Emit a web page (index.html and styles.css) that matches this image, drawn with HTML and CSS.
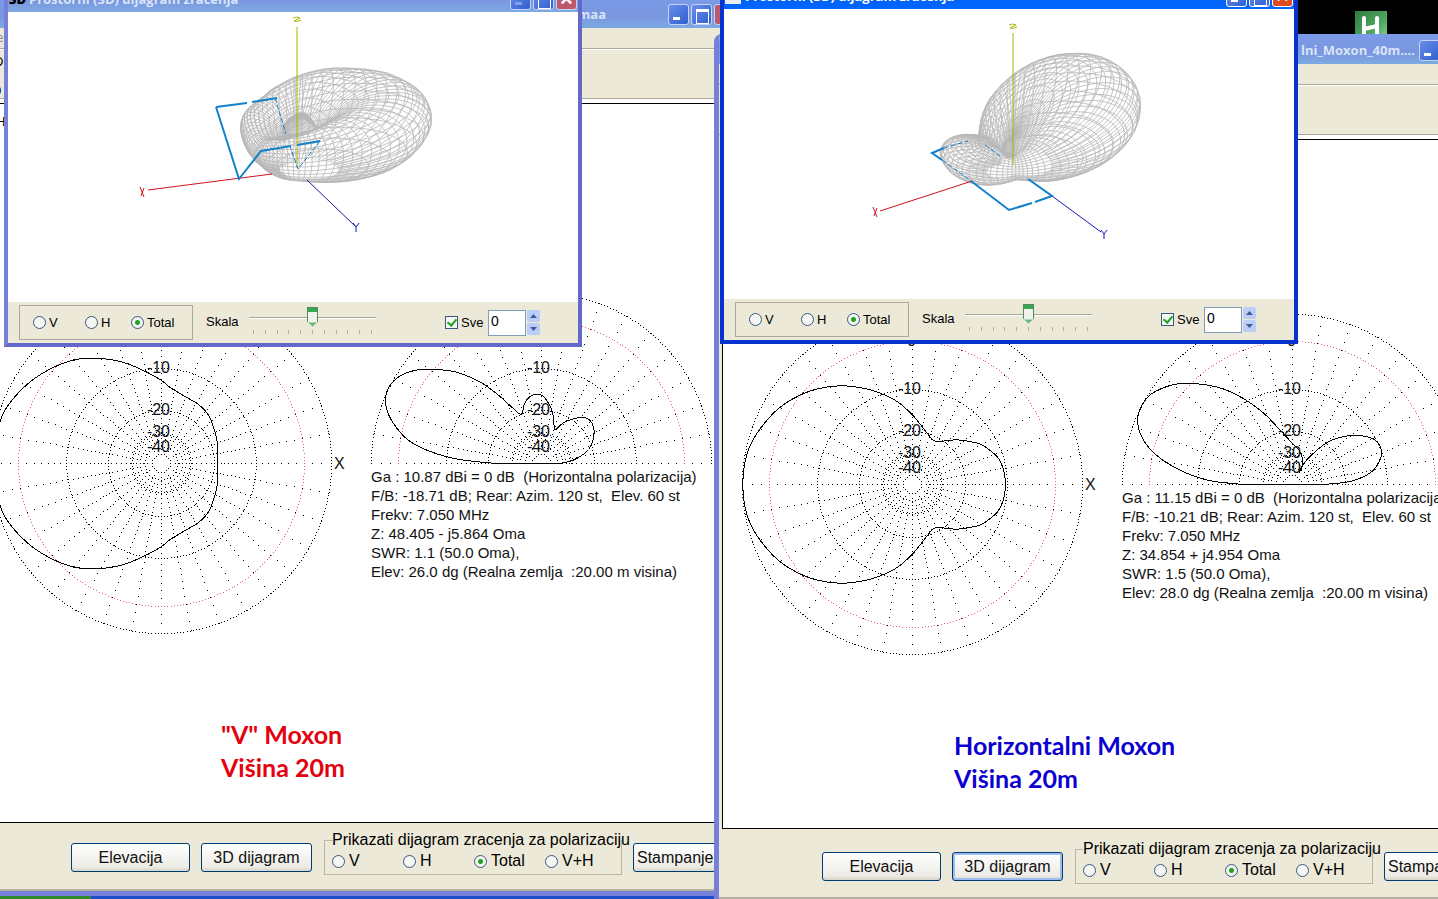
FILE: index.html
```
<!DOCTYPE html>
<html lang="sr">
<head>
<meta charset="utf-8">
<title>Moxon 40m</title>
<link rel="stylesheet" href="styles.css">
</head>
<body>
<main class="desktop">
  <svg class="desk-icon" width="32" height="32" viewBox="0 0 32 32" aria-label="H">
    <defs><linearGradient id="hg" x1="0" y1="0" x2="1" y2="1"><stop offset="0" stop-color="#2f7d40"/><stop offset=".6" stop-color="#4fa860"/><stop offset="1" stop-color="#9ad6a0"/></linearGradient></defs>
    <rect width="32" height="32" fill="url(#hg)"/>
    <path d="M9 7V29M22 7V29M9 18L22 15" stroke="#fff" stroke-width="4" stroke-linecap="round" fill="none"/>
  </svg>
  <div class="taskbar"><span class="start"></span></div>

  <section class="window main-window main-left">
    <header class="titlebar">
      <span class="title">maa</span>
      <button class="wbtn min" aria-label="Minimize"></button><button class="wbtn max" aria-label="Maximize"></button><button class="wbtn close" aria-label="Close"></button>
    </header>
    <nav class="menubar"><a href="#">File</a></nav>
    <div class="toolbar"><span>D</span><span>0</span></div>
    <div class="canvas">
      <span class="corner">H</span>
      <svg class="polar" data-plot="azimuth" data-model="v"></svg>
      <div class="side">
        <svg class="elev" data-plot="elevation" data-model="v"></svg>
        <div class="info">Ga : 10.87 dBi = 0 dB&nbsp; (Horizontalna polarizacija)<br>F/B: -18.71 dB; Rear: Azim. 120 st,&nbsp; Elev. 60 st<br>Frekv: 7.050 MHz<br>Z: 48.405 - j5.864 Oma<br>SWR: 1.1 (50.0 Oma),<br>Elev: 26.0 dg (Realna zemlja&nbsp; :20.00 m visina)</div>
      </div>
      <p class="caption red">"V" Moxon<br>Višina 20m</p>
    </div>
    <div class="actions">
      <button class="btn wide">Elevacija</button>
      <button class="btn">3D dijagram</button>
      <fieldset class="pol"><legend>Prikazati dijagram zracenja za polarizaciju</legend>
        <label><input type="radio" name="p1">V</label><label><input type="radio" name="p1">H</label><label><input type="radio" name="p1" checked>Total</label><label><input type="radio" name="p1">V+H</label>
      </fieldset>
      <button class="btn print">Stampanje</button>
    </div>
  </section>

  <section class="window popup popup-left">
    <header class="titlebar">
      <b class="icon3d">3D</b><span class="title">Prostorni (3D) dijagram zracenja</span>
      <button class="wbtn min dim" aria-label="Minimize"></button><button class="wbtn max" aria-label="Maximize"></button><button class="wbtn close" aria-label="Close">×</button>
    </header>
    <svg class="view3d" data-view="v"></svg>
    <div class="controls">
      <div class="group"><label><input type="radio" name="t1">V</label><label><input type="radio" name="t1">H</label><label><input type="radio" name="t1" checked>Total</label></div>
      <label class="skala" for="s1">Skala</label>
      <div class="slider"><input id="s1" type="range" min="0" max="10" value="5"><div class="ticks"><i></i><i></i><i></i><i></i><i></i><i></i><i></i><i></i><i></i><i></i><i></i></div></div>
      <label class="sve"><input type="checkbox" checked>Sve</label>
      <input class="num" type="text" value="0" aria-label="Sve">
      <div class="spin"><button aria-label="Up"><svg width="7" height="4" viewBox="0 0 7 4"><path d="M0 4L3.500 0L7 4z"/></svg></button><button aria-label="Down"><svg width="7" height="4" viewBox="0 0 7 4"><path d="M0 0L3.500 4L7 0z"/></svg></button></div>
    </div>
  </section>

  <section class="window main-window main-right">
    <header class="titlebar">
      <span class="title">lni_Moxon_40m....</span>
      <button class="wbtn min" aria-label="Minimize"></button><button class="wbtn max" aria-label="Maximize"></button><button class="wbtn close" aria-label="Close"></button>
    </header>
    <nav class="menubar"><a href="#">File</a></nav>
    <div class="toolbar"></div>
    <div class="canvas">
      <svg class="polar" data-plot="azimuth" data-model="h"></svg>
      <div class="side">
        <svg class="elev" data-plot="elevation" data-model="h"></svg>
        <div class="info">Ga : 11.15 dBi = 0 dB&nbsp; (Horizontalna polarizacija)<br>F/B: -10.21 dB; Rear: Azim. 120 st,&nbsp; Elev. 60 st<br>Frekv: 7.050 MHz<br>Z: 34.854 + j4.954 Oma<br>SWR: 1.5 (50.0 Oma),<br>Elev: 28.0 dg (Realna zemlja&nbsp; :20.00 m visina)</div>
      </div>
      <p class="caption blue">Horizontalni Moxon<br>Višina 20m</p>
    </div>
    <div class="actions">
      <button class="btn wide">Elevacija</button>
      <button class="btn focused">3D dijagram</button>
      <fieldset class="pol"><legend>Prikazati dijagram zracenja za polarizaciju</legend>
        <label><input type="radio" name="p2">V</label><label><input type="radio" name="p2">H</label><label><input type="radio" name="p2" checked>Total</label><label><input type="radio" name="p2">V+H</label>
      </fieldset>
      <button class="btn print">Stampanje</button>
    </div>
  </section>

  <section class="window popup popup-right">
    <header class="titlebar">
      <b class="icon3d pale"></b><span class="title">Prostorni (3D) dijagram zracenja</span>
      <button class="wbtn min" aria-label="Minimize"></button><button class="wbtn max" aria-label="Maximize"></button><button class="wbtn close" aria-label="Close">×</button>
    </header>
    <svg class="view3d" data-view="h"></svg>
    <div class="controls">
      <div class="group"><label><input type="radio" name="t2">V</label><label><input type="radio" name="t2">H</label><label><input type="radio" name="t2" checked>Total</label></div>
      <label class="skala" for="s2">Skala</label>
      <div class="slider"><input id="s2" type="range" min="0" max="10" value="5"><div class="ticks"><i></i><i></i><i></i><i></i><i></i><i></i><i></i><i></i><i></i><i></i><i></i></div></div>
      <label class="sve"><input type="checkbox" checked>Sve</label>
      <input class="num" type="text" value="0" aria-label="Sve">
      <div class="spin"><button aria-label="Up"><svg width="7" height="4" viewBox="0 0 7 4"><path d="M0 4L3.500 0L7 4z"/></svg></button><button aria-label="Down"><svg width="7" height="4" viewBox="0 0 7 4"><path d="M0 0L3.500 4L7 0z"/></svg></button></div>
    </div>
  </section>
</main>
<script src="plots.js"></script>
</body>
</html>
```
FILE: styles.css
```
* { box-sizing: border-box; }
body { margin: 0; font-family: "Liberation Sans", Arial, sans-serif; font-size: 16px; color: #000; }
button, input { font: inherit; }
.desktop { position: relative; height: 100vh; overflow: hidden; background: #000; }
.desk-icon { position: absolute; right: 51px; top: 11px; }
.taskbar { position: absolute; left: 0; right: 0; bottom: 0; height: 6px; background: #1e4fc8; display: flex; }
.start { width: 91px; background: #2f8a2c; }

.window { position: absolute; display: flex; flex-direction: column; background: #ece9d8; border-style: solid; border-color: #7780d8; overflow: hidden; }
.main-window { width: calc(50% + 60px); border-width: 0 5px 5px; border-radius: 8px 8px 0 0; }
.main-left { left: -37px; top: -2px; bottom: 3px; }
.main-right { left: calc(50% - 5px); top: 34px; bottom: -5px; }
.popup { width: 578px; border-width: 0 4px 4px; }
.popup-left { left: 4px; top: -17px; border-right-color: #6468c8; border-bottom-color: #6468c8; }
.popup-right { left: calc(50% + 1px); top: -20px; border-color: #0831d0; }

.titlebar { display: flex; flex: none; align-items: center; gap: 2px; background: linear-gradient(#7b9ae8, #7a96df 60%, #7daae2); color: #d8e4f8; font: bold 13px "Open Sans", sans-serif; }
.main-window .titlebar { height: 30px; justify-content: flex-end; margin: 0 -5px; padding: 2px 7px 0 0; }
.main-left .title { padding-right: 60px; }
.main-right .title { padding-right: 2px; }
.popup .titlebar { height: 29px; margin: 0 -4px; padding: 3px 5px 0; }
.popup .title { flex: 1; }
.popup-right .titlebar { background: linear-gradient(#0a5ae6, #0066ff); color: #fff; }
.icon3d { width: 18px; color: #000; }
.icon3d.pale { height: 16px; width: 16px; margin-right: 2px; background: #e8ecf4; }
.wbtn { position: relative; flex: none; width: 21px; height: 21px; padding: 0; border: 1px solid #c4d4f6; border-radius: 3px; background: linear-gradient(135deg, #6a8eea, #2f5fd0); color: #fff; font: bold 22px/18px "Liberation Sans", sans-serif; }
.wbtn.min::after { content: ""; position: absolute; left: 4px; bottom: 4px; width: 7px; height: 3px; background: #fff; }
.wbtn.dim::after { opacity: .3; }
.wbtn.max::after { content: ""; position: absolute; left: 4px; top: 4px; width: 11px; height: 11px; border: 1px solid #fff; border-top-width: 3px; }
.wbtn.close { background: #c0586c; }
.popup-right .wbtn.close { background: #e04a20; }
.popup-right .wbtn { border-color: #fff; }

.menubar { flex: none; height: 21px; padding: 3px 0 0 16px; border-bottom: 1px solid #aca899; font-size: 12px; }
.menubar a { color: #888; text-decoration: none; }
.toolbar { flex: none; height: 50px; border-bottom: 1px solid #aca899; border-top: 1px solid #fff; padding: 4px 0 0 26px; display: flex; flex-direction: column; gap: 14px; font-size: 13px; line-height: 15px; }
.main-window .canvas { margin: 4px 0 0 3px; }
.canvas { position: relative; flex: 1; min-height: 0; display: flex; gap: 20px; align-items: center; background: #fff; border: solid #000; border-width: 1px 0 1px 1px; outline: 4px solid #fff; outline-offset: 0; clip-path: inset(-4px 0 0 0); }
.corner { position: absolute; left: 24px; top: 10px; font-size: 13px; }
.polar { flex: none; width: 380px; height: 360px; margin-left: -1px; }
.side { flex: none; width: 358px; height: 360px; }
.elev { display: block; width: 358px; height: 184px; }
.polar text, .elev text { font-size: 16px; fill: #111; }
.info { font-size: 15px; line-height: 19px; white-space: nowrap; color: #111; }
.caption { position: absolute; margin: 0; font: bold 25px/33px Lato, Carlito, sans-serif; }
.caption.red { left: 249px; top: 614px; color: #e4000c; }
.caption.blue { left: 231px; top: 589px; color: #0c00d0; }

.actions { flex: none; height: 68px; display: flex; align-items: flex-start; padding: 20px 0 0 103px; border-bottom: 2px solid #b4b0a4; }
.main-right .actions { height: 70px; padding-top: 23px; }
.btn { flex: none; width: 111px; height: 29px; margin-right: 12px; padding: 0; border: 1px solid #003c74; border-radius: 3px; background: linear-gradient(#fff, #ecebe5 85%, #d8d3c6); white-space: nowrap; color: #111; }
.btn.wide { width: 119px; margin-right: 11px; }
.btn.focused { box-shadow: inset 0 0 0 2px #9dbcf0; }
.btn.print { width: 92px; padding-left: 3px; text-align: left; }
.pol { flex: none; width: 297px; height: 44px; margin: -12px 11px 0 0; padding: 1px 0 0 7px; border: 1px solid #b9b6a6; display: grid; grid-template-columns: repeat(4, 71px); align-items: start; }
.pol legend { padding: 0; line-height: 18px; white-space: nowrap; width: 289px; overflow: visible; }
.pol label { display: flex; align-items: center; gap: 4px; line-height: 22px; }

input[type="radio"], input[type="checkbox"] { appearance: none; flex: none; width: 13px; height: 13px; margin: 0; border: 1px solid #35597f; background: #f6f6f2; }
input[type="radio"] { border-radius: 50%; }
input[type="radio"]:checked { background: radial-gradient(circle, #21a121 0 2px, #f6f6f2 3px); }
input[type="checkbox"] { position: relative; }
input[type="checkbox"]:checked::after { content: ""; position: absolute; left: 3px; top: 0; width: 4px; height: 7px; border: solid #21a121; border-width: 0 2px 2px 0; transform: rotate(40deg); }

.view3d { display: block; width: 100%; height: 290px; background: #fff; }
.controls { display: flex; align-items: center; height: 41px; padding-left: 11px; font-size: 13px; }
.group { display: flex; align-items: center; width: 174px; height: 35px; padding-left: 13px; border: 1px solid #aca899; }
.group label { display: flex; align-items: center; gap: 3px; width: 52px; }
.group label:nth-child(2) { width: 46px; }
.skala { margin-left: 13px; width: 43px; padding-bottom: 2px; }
.slider { width: 127px; height: 34px; }
.slider input { display: block; appearance: none; width: 127px; height: 22px; margin: 0; background: linear-gradient(#a8a698, #a8a698) 0 11px / 100% 1px no-repeat, linear-gradient(#fff, #fff) 0 12px / 100% 1px no-repeat; }
.slider input::-webkit-slider-thumb { appearance: none; width: 11px; height: 20px; border: 1px solid #4e8a62; background: linear-gradient(#36a854 0 4px, #f2f2ec 4px 14px, #6cb87c 15px); clip-path: polygon(0 0, 100% 0, 100% 75%, 50% 100%, 0 75%); }
.ticks { display: flex; justify-content: space-between; padding: 2px 4px 0; }
.ticks i { width: 1px; height: 4px; background: #b4b09c; }
.sve { display: flex; align-items: center; gap: 3px; margin-left: 69px; width: 43px; }
.num { width: 38px; height: 26px; padding: 0 2px 4px; border: 1px solid #7f9db9; background: #fff; font-size: 14px; }
.spin { display: flex; flex-direction: column; gap: 1px; margin-left: 1px; }
.spin button { display: flex; align-items: center; justify-content: center; width: 13px; height: 12px; padding: 0; border: 0; border-radius: 2px; background: #bccdf8; }
.spin path { fill: #3c5a9a; }
```
FILE: plots.js
```
const NS = 'http://www.w3.org/2000/svg';
const R = 170;

// Pattern outlines in pixels from the plot centre, x to the right, y up.
const scale = (pts, cx, cy) => pts.map(([x, y]) => [(x - cx) / 3, (cy - y) / 3]);
const PATTERNS = {
  v: {
    az: scale([[655,520],[655,470],[648,430],[630,380],[600,345],[550,315],[510,290],[485,270],[440,245],[380,219],[330,208],[290,205],[230,208],[170,228],[110,262],[60,305],[20,355],[0,400],[-18,460],[-25,520]], 485, 520),
    el: scale([[600,520],[640,510],[680,485],[698,455],[703,420],[690,390],[660,382],[615,396],[588,418],[584,412],[580,375],[570,345],[550,318],[530,313],[510,320],[495,340],[487,370],[478,370],[450,345],[410,310],[360,275],[290,246],[215,237],[170,240],[125,255],[92,285],[78,320],[82,360],[105,405],[150,453],[220,487],[300,508],[400,519]], 544, 520)
  },
  h: {
    az: scale([[859,552],[853,510],[838,475],[815,452],[785,432],[750,423],[710,418],[680,421],[645,421],[625,400],[600,368],[578,342],[540,308],[500,285],[440,265],[370,256],[300,264],[240,285],[180,322],[130,375],[95,430],[76,490],[70,552]], 578, 552),
    el: scale([[740,552],[820,542],[880,515],[908,475],[910,445],[890,417],[845,405],[800,408],[750,425],[700,465],[675,495],[665,515],[672,500],[675,480],[668,455],[650,435],[610,392],[560,340],[500,296],[430,263],[350,249],[300,250],[250,265],[210,290],[184,335],[182,380],[205,430],[250,475],[320,515],[400,541],[500,552]], 643, 552)
  }
};

function make(parent, tag, attrs, text) {
  const e = document.createElementNS(NS, tag);
  for (const k in attrs) e.setAttribute(k, attrs[k]);
  if (text) e.textContent = text;
  parent.appendChild(e);
  return e;
}

// Catmull-Rom subdivision of an open polyline
function smooth(p) {
  const out = [];
  for (let i = 0; i < p.length - 1; i++) {
    const a = p[Math.max(0, i - 1)], b = p[i], c = p[i + 1], d = p[Math.min(p.length - 1, i + 2)];
    for (let t = 0; t < 1; t += 0.125) {
      out.push([0, 1].map(k => 0.5 * (2 * b[k] + (c[k] - a[k]) * t + (2 * a[k] - 5 * b[k] + 4 * c[k] - d[k]) * t * t + (3 * b[k] - a[k] - 3 * c[k] + d[k]) * t * t * t)));
    }
  }
  out.push(p[p.length - 1]);
  return out;
}

function drawPlot(svg) {
  const half = svg.dataset.plot === 'elevation';
  const cx = half ? 170 : 190, cy = 180;
  const model = PATTERNS[svg.dataset.model];
  const dot = (r, a) => `M${Math.round(cx + r * Math.cos(a))} ${Math.round(cy - r * Math.sin(a)) + 0.5}h1`;
  const ring = r => {
    const n = Math.round(2 * Math.PI * r / 3.2 / 4) * 4;
    let d = '';
    for (let i = 0; i <= (half ? n / 2 : n - 1); i++) d += dot(r, i * 2 * Math.PI / n);
    return d;
  };
  let d = '';
  for (const db of [0, 10, 20, 30, 40, 50]) d += ring(R * Math.pow(0.89, db / 2));
  for (let a = 0; a <= (half ? 180 : 350); a += 10) {
    let last = 999;
    for (let db = 0; db < 45; db++) {
      const r = R * Math.pow(0.89, db / 2);
      if (last - r < 3 || (a % 30 && r < 18)) continue;
      last = r;
      d += dot(r, a * Math.PI / 180);
    }
  }
  make(svg, 'path', { d, stroke: '#000', fill: 'none', 'shape-rendering': 'crispEdges' });
  make(svg, 'path', { d: ring(143), stroke: '#f06070', fill: 'none', 'shape-rendering': 'crispEdges' });

  let pts = smooth(half ? model.el : model.az);
  if (!half) pts = pts.concat(pts.slice().reverse().map(([x, y]) => [x, -y]));
  make(svg, 'path', {
    d: 'M' + pts.map(([x, y]) => (cx + x).toFixed(1) + ' ' + (cy - y + 0.5).toFixed(1)).join('L') + 'Z',
    stroke: '#000', fill: 'none', 'shape-rendering': 'crispEdges'
  });
  [[0, 143], [10, 95], [20, 53], [30, 31], [40, 16]].forEach(([n, y]) =>
    make(svg, 'text', { x: n ? cx + 9 : cx + 4, y: cy - y + 5, 'text-anchor': 'end' }, n ? '-' + n : '0'));
  if (!half) make(svg, 'text', { x: cx + 173, y: cy + 6 }, 'X');
}

// Radius of an outline as a function of the angle in degrees, 0..180
function radiusOf(points) {
  const s = smooth(points).map(([x, y]) => [Math.atan2(Math.max(0, y), x) * 180 / Math.PI, Math.hypot(x, y) / R]).sort((a, b) => a[0] - b[0]);
  return a => {
    for (let i = 1; i < s.length; i++) {
      if (s[i][0] >= a) {
        const [a0, r0] = s[i - 1], [a1, r1] = s[i];
        return a1 === a0 ? r1 : r0 + (r1 - r0) * Math.min(1, Math.max(0, (a - a0) / (a1 - a0)));
      }
    }
    return s[s.length - 1][1];
  };
}

const VIEWS = {
  v: {
    shift: [-8, -12], o: [297, 171], ex: [-140, 16], ey: [56, 51], ez: -140, peak: 26, lift: 0.16,
    x: [148, 190, 272, 174], y: [307, 180, 355, 226], z: [297, 27, 297, 168],
    labels: [[142, 192], [356, 228], [297, 20]],
    wire: 'M216 107L247 103M252 102L277 98M216 107L239 179L261 151L291 146M297 145L320 141',
    thin: 'M320 141L298 169L290 146M275 98L286 134'
  },
  h: {
    shift: [-724, -9], o: [1013, 168], ex: [-126, 38], ey: [84, 63], ez: -135, peak: 28, lift: 0,
    x: [880, 211, 972, 181], y: [1052, 196, 1101, 232], z: [1013, 33, 1013, 165],
    labels: [[875, 212], [1104, 235], [1013, 27]],
    wire: 'M944 148L932 153L942 160M971 181L1009 210L1032 203M1035 202L1052 196L1028 179',
    thin: 'M944 148L968 141M942 160L971 181M985 145L1000 156'
  }
};

function drawView(svg) {
  const v = VIEWS[svg.dataset.view], m = PATTERNS[svg.dataset.view];
  const az = radiusOf(m.az), el = radiusOf(m.el);
  const g = make(svg, 'g', { transform: `translate(${v.shift})`, fill: 'none' });
  const zenith = el(90);
  const point = (a, e) => {
    const A = a > 180 ? 360 - a : a;
    const rad = a * Math.PI / 180, er = e * Math.PI / 180;
    const w = (1 - Math.cos(rad)) / 2;
    const cut = t => el(t) * (1 - w) + el(180 - t) * w;
    const k = Math.pow(e / 90, 3);
    const side = v.lift * Math.pow(Math.sin(rad), 2) * Math.pow(Math.sin(2 * er), 2);
    const r = side + cut(e) / cut(v.peak) * az(A) * (1 - k) + (e > 60 ? (zenith * 0.5 + cut(e) * 0.5) : cut(e)) * k;
    const x = r * Math.cos(er) * Math.cos(rad), y = r * Math.cos(er) * Math.sin(rad), z = r * Math.sin(er);
    return (v.o[0] + x * v.ex[0] + y * v.ey[0]).toFixed(1) + ' ' + (v.o[1] + x * v.ex[1] + y * v.ey[1] + z * v.ez).toFixed(1);
  };
  let d = '';
  for (let a = 0; a < 360; a += 5) {
    const line = [];
    for (let e = 0; e <= 90; e += 3) line.push(point(a, e));
    d += 'M' + line.join('L');
  }
  for (let e = 3; e < 90; e += 3) {
    const line = [];
    for (let a = 0; a < 360; a += 5) line.push(point(a, e));
    d += 'M' + line.join('L') + 'Z';
  }
  make(g, 'path', { d, stroke: '#b8b8b8', 'stroke-width': 0.8 });
  const axis = (p, c) => make(g, 'path', { d: `M${p[0]} ${p[1]}L${p[2]} ${p[3]}`, stroke: c });
  axis(v.x, '#d01020'); axis(v.y, '#1818a8'); axis(v.z, '#a8b400');
  make(g, 'path', { d: v.wire, stroke: '#1280cc', 'stroke-width': 2 });
  make(g, 'path', { d: v.thin, stroke: '#1280cc', 'stroke-dasharray': '5 2' });
  const [X, Y, Z] = v.labels;
  make(g, 'path', { d: `M${X[0] - 2} ${X[1] - 5}l4 10M${X[0] + 2} ${X[1] - 4}l-3 8`, stroke: '#d01020' });
  make(g, 'path', { d: `M${Y[0] - 3} ${Y[1] - 5}l3 4l3 -4M${Y[0]} ${Y[1] - 1}v5`, stroke: '#1818a8' });
  make(g, 'path', { d: `M${Z[0] - 4} ${Z[1] - 2}q4 -2 7 0l-6 3q4 1 7 -1`, stroke: '#a8b400' });
}

document.querySelectorAll('[data-plot]').forEach(drawPlot);
document.querySelectorAll('[data-view]').forEach(drawView);
```
